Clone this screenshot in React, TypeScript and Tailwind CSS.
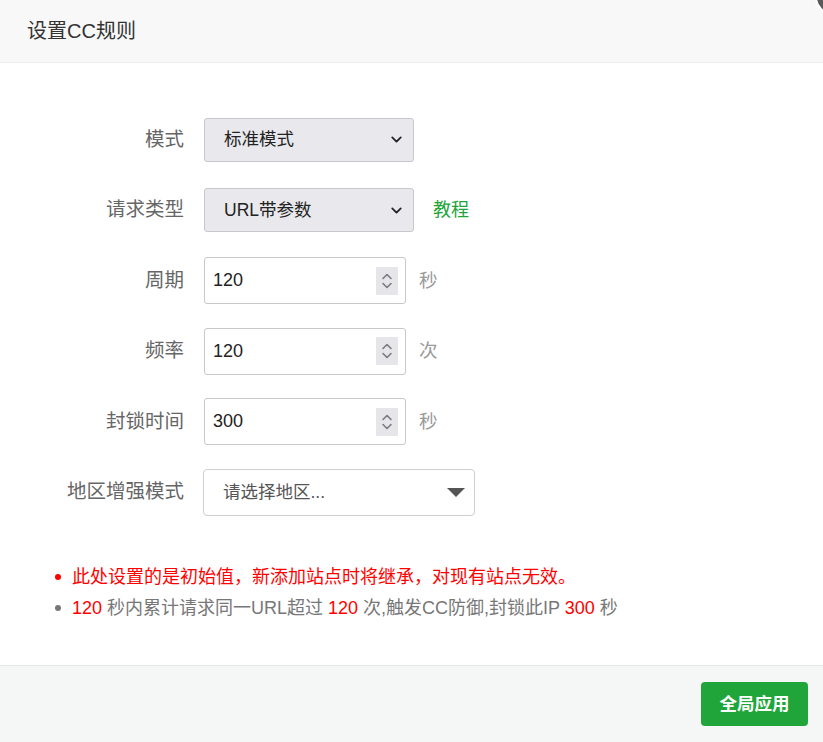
import { ChevronDown } from 'lucide-react'

const font = { fontFamily: '"Liberation Sans", "Noto Sans CJK SC", sans-serif' }

function Row({ label, children }: { label: string; children: React.ReactNode }) {
  return (
    <div className="flex h-[47px] items-center">
      <div className="w-[184px] shrink-0 text-right text-[19.5px] text-[#666]">{label}</div>
      <div className="ml-[20px] flex items-center">{children}</div>
    </div>
  )
}

function SelectBox({ value }: { value: string }) {
  return (
    <div className="flex h-[44px] w-[210px] items-center justify-between rounded-[3px] border border-[#c8c8cc] bg-[#e9e9ed] pl-[19px] pr-[8px] text-[17.5px] text-[#222]">
      <span>{value}</span>
      <ChevronDown className="h-[17px] w-[17px] text-[#222]" strokeWidth={2.5} />
    </div>
  )
}

function NumberBox({ value, unit }: { value: string; unit: string }) {
  return (
    <>
      <div className="flex h-[47px] w-[202px] items-center justify-between rounded-[3px] border border-[#c8c8c8] bg-white pl-[8px] pr-[7px] text-[18px] text-[#222]">
        <span>{value}</span>
        <div className="flex h-[28px] w-[22px] items-center justify-center bg-[#e6e6ea]">
          <svg width="14" height="22" viewBox="0 0 14 22" fill="none" stroke="#7a7a80" strokeWidth="1.6" strokeLinecap="round" strokeLinejoin="round">
            <path d="M3 8.5 L7 4.5 L11 8.5" />
            <path d="M3 13.5 L7 17.5 L11 13.5" />
          </svg>
        </div>
      </div>
      <span className="ml-[13px] text-[18.5px] text-[#999]">{unit}</span>
    </>
  )
}

export default function App() {
  return (
    <div style={font} className="relative flex h-[742px] w-[823px] flex-col overflow-hidden bg-white">
      <div className="absolute left-[815px] top-[-21px] h-[36px] w-[36px] rounded-full border-2 border-white bg-[#5a5a5a]" />

      <div className="flex h-[63px] shrink-0 items-center border-b border-[#ececec] bg-[#f8f8f8] pl-[27px] text-[20px] text-[#333]">
        设置CC规则
      </div>

      <div className="flex-1 pt-[53px]">
        <div className="flex flex-col gap-[23.5px]">
          <Row label="模式">
            <SelectBox value="标准模式" />
          </Row>
          <Row label="请求类型">
            <SelectBox value="URL带参数" />
            <a className="ml-[19px] text-[18px] text-[#20a53a]">教程</a>
          </Row>
          <Row label="周期">
            <NumberBox value="120" unit="秒" />
          </Row>
          <Row label="频率">
            <NumberBox value="120" unit="次" />
          </Row>
          <Row label="封锁时间">
            <NumberBox value="300" unit="秒" />
          </Row>
          <Row label="地区增强模式">
            <div className="-ml-px flex h-[47px] w-[272px] items-center justify-between rounded-[4px] border border-[#cfcfcf] bg-white pl-[19px] pr-[8px] text-[17.5px] text-[#555]">
              <span>请选择地区...</span>
              <svg width="20" height="12" viewBox="0 0 20 12">
                <path d="M1 2 L19 2 L10 11 Z" fill="#555" />
              </svg>
            </div>
          </Row>
        </div>

        <ul className="mt-[46px] pl-[55px] text-[18px] leading-[31px]">
          <li className="flex items-center text-[#ff0000]">
            <span className="mr-[11px] h-[6px] w-[6px] rounded-full bg-[#ff0000]" />
            此处设置的是初始值，新添加站点时将继承，对现有站点无效。
          </li>
          <li className="flex items-center text-[#777]">
            <span className="mr-[11px] h-[6px] w-[6px] rounded-full bg-[#777]" />
            <span>
              <span className="text-[#ff0000]">120</span> 秒内累计请求同一URL超过 <span className="text-[#ff0000]">120</span> 次,触发CC防御,封锁此IP <span className="text-[#ff0000]">300</span> 秒
            </span>
          </li>
        </ul>
      </div>

      <div className="flex h-[77px] shrink-0 items-center justify-end border-t border-[#e6e6e6] bg-[#f5f6f6] pr-[15px]">
        <button className="h-[44px] w-[107px] rounded-[4px] bg-[#20a53a] text-[17.5px] font-bold text-white">全局应用</button>
      </div>
    </div>
  )
}
